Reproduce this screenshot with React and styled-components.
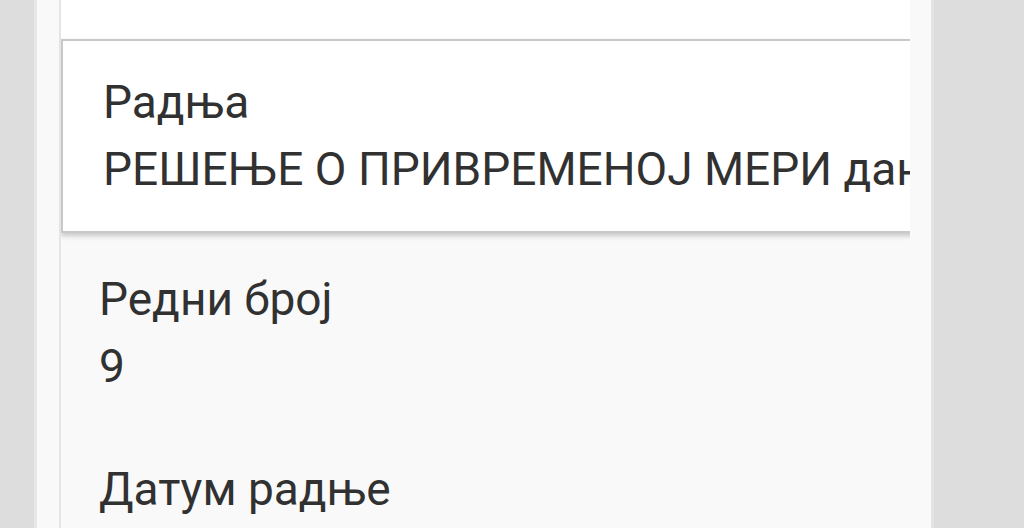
import React from "react";
import styled, { createGlobalStyle } from "styled-components";

const GlobalStyle = createGlobalStyle`
  *, *::before, *::after {
    box-sizing: border-box;
  }
  html, body {
    margin: 0;
    padding: 0;
    height: 100%;
    overflow: hidden;
    background: #dddddd;
  }
  #root {
    height: 100%;
  }
`;

// gray screen behind the panel
const Screen = styled.div`
  display: flex;
  height: 100%;
  padding-left: 34px;
  background: #dddddd;
  font-family: Roboto, "Noto Sans", "DejaVu Sans", sans-serif;
  color: #313131;
`;

// light panel holding the list
const Panel = styled.div`
  flex: none;
  width: 900px;
  height: 100%;
  background: #f9f9f9;
  border-left: 3px solid #e7e7e7;
  border-right: 3px solid #e3e3e3;
  padding: 0 21px 0 22px;
`;

const List = styled.div`
  height: 100%;
  border-left: 2px solid #e5e5e5;
  overflow: hidden;
  display: flex;
  flex-direction: column;
`;

// tail of the previous row, scrolled mostly out of view
const PrevRow = styled.div`
  flex: none;
  height: 39px;
  background: #ffffff;
`;

const Row = styled.div`
  flex: none;
  position: relative;
  padding: ${(p) => (p.$selected ? "34px 0 35px 40px" : "39px 0 30px 38px")};
  background: ${(p) => (p.$selected ? "#ffffff" : "transparent")};
  border: ${(p) => (p.$selected ? "2px solid #c8c8c8" : "none")};
  border-right: none;
  box-shadow: ${(p) => (p.$selected ? "0 3px 5px rgba(0, 0, 0, 0.2)" : "none")};
  width: ${(p) => (p.$selected ? "1200px" : "auto")};
  z-index: ${(p) => (p.$selected ? 1 : 0)};
`;

const Label = styled.div`
  font-size: 46px;
  line-height: 54px;
  white-space: nowrap;
`;

const Value = styled.div`
  margin-top: 13px;
  font-size: 46px;
  line-height: 54px;
  white-space: nowrap;
`;

const rows = [
  { label: "Радња", value: "РЕШЕЊЕ О ПРИВРЕМЕНОЈ МЕРИ дана 14.05.2018.", selected: true },
  { label: "Редни број", value: "9" },
  { label: "Датум радње", value: "14.05.2018." },
];

export default function App() {
  return (
    <>
      <GlobalStyle />
      <Screen>
        <Panel>
          <List>
            <PrevRow />
            {rows.map((r) => (
              <Row key={r.label} $selected={r.selected}>
                <Label>{r.label}</Label>
                <Value>{r.value}</Value>
              </Row>
            ))}
          </List>
        </Panel>
      </Screen>
    </>
  );
}
